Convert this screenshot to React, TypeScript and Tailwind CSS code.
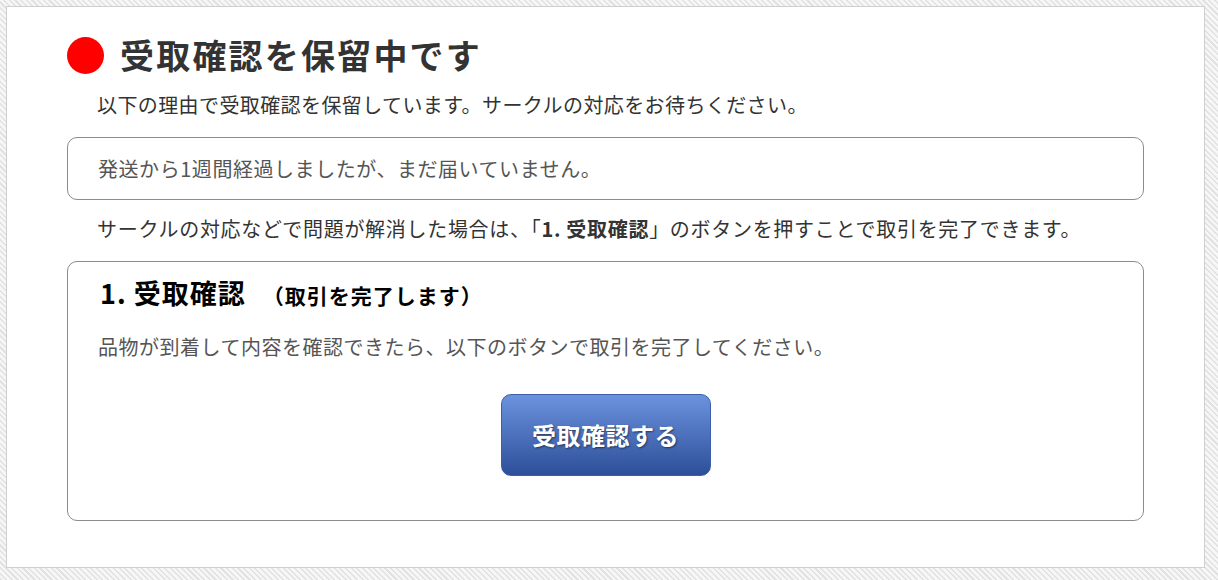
import * as React from "react";

const font = "font-['Meiryo','Noto_Sans_CJK_JP',sans-serif]";

export default function App() {
  return (
    <div
      className={`min-h-[580px] w-full pt-[6px] pl-[6px] pr-[13px] pb-[11px] bg-[repeating-linear-gradient(45deg,#e2e2e2_0px,#e2e2e2_1.5px,#f6f6f6_1.5px,#f6f6f6_4px)] ${font}`}
    >
      <div className="border border-[#cfcfcf] bg-white px-[60px] pt-[28px] pb-[46px]">
        <div className="flex items-center gap-[16px] h-[40px]">
          <span className="block w-[37px] h-[37px] rounded-full bg-[#ff0000]" />
          <h1 className="text-[34px] font-bold text-[#333] leading-none tracking-[2.2px]">受取確認を保留中です</h1>
        </div>

        <p className="mt-[16px] pl-[30px] text-[20px] leading-[28px] text-[#333] tracking-[0.4px]">
          以下の理由で受取確認を保留しています。サークルの対応をお待ちください。
        </p>

        <div className="mt-[18px] h-[63px] flex items-center rounded-[10px] border border-[#8c8c8c] px-[30px]">
          <p className="text-[20px] text-[#555] leading-none tracking-[0.55px]">発送から1週間経過しましたが、まだ届いていません。</p>
        </div>

        <p className="mt-[15px] pl-[30px] text-[20px] leading-[28px] text-[#333] tracking-[0.7px]">
          サークルの対応などで問題が解消した場合は、「<span className="font-bold">1. 受取確認</span>」のボタンを押すことで取引を完了できます。
        </p>

        <div className="mt-[18px] h-[260px] rounded-[10px] border border-[#8c8c8c] px-[30px] pt-[14px]">
          <h2 className="flex items-baseline text-[27px] font-bold text-black leading-[34px]">
            <span className="pl-[2px] tracking-[1px]">1. 受取確認</span>
            <span className="ml-[17px] text-[21px] tracking-[1px]">（取引を完了します）</span>
          </h2>
          <p className="mt-[22px] text-[20px] text-[#555] leading-[26px] tracking-[0.5px]">
            品物が到着して内容を確認できたら、以下のボタンで取引を完了してください。
          </p>
          <div className="mt-[34px] flex justify-center">
            <button className="w-[210px] h-[82px] rounded-[10px] border border-[#3d5ea6] bg-[linear-gradient(to_bottom,#6c92de,#2d4f99)] text-white text-[24px] font-bold tracking-[0.5px] [text-shadow:1px_1px_2px_rgba(0,0,0,0.5)]">
              受取確認する
            </button>
          </div>
        </div>
      </div>
    </div>
  );
}
